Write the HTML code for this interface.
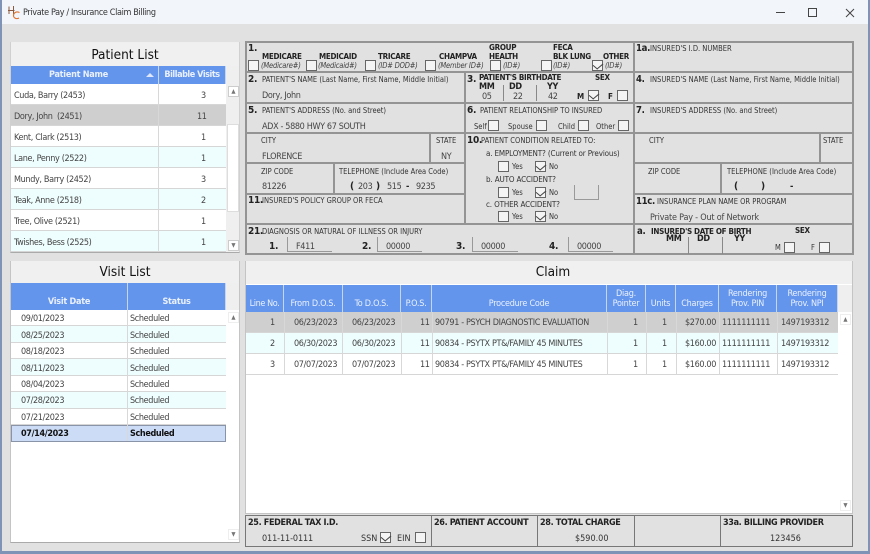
<!DOCTYPE html>
<html><head><meta charset="utf-8">
<style>
html,body{margin:0;padding:0}
#w{position:relative;width:870px;height:554px;overflow:hidden;background:#e1e1e1;font-family:"DejaVu Sans Condensed","Liberation Sans",sans-serif;font-size:9px;color:#333}
#w div{position:absolute;box-sizing:border-box}
.t{white-space:nowrap;line-height:12px;height:12px;margin-top:1px}
.b{font-weight:bold;letter-spacing:-.3px;color:#222}
.s{font-size:7.5px;color:#333}
.m{font-size:8px;font-weight:bold;color:#222;letter-spacing:-.3px}
.ft{font-size:9px;letter-spacing:-.35px}
.i{font-size:7.5px;font-style:italic;color:#444;letter-spacing:-.2px}
.v{font-size:9px;color:#444;letter-spacing:-.35px}
.h{background:#949494;height:2px}
.l{background:#949494;width:2px}
.c{width:11px;height:11px;background:#f4f4f4;border:1px solid #666}
.k::after{content:"";position:absolute;left:2px;top:0;width:5px;height:7px;border:solid #444;border-width:0 1px 1px 0;transform:rotate(40deg) skewX(-10deg)}
.pt{background:#f0f0f0;text-align:center;font-size:13.5px;color:#111;line-height:24px}
.hd{background:#6495ed;color:#eaf1fd;text-align:center;font-size:9px;letter-spacing:-.25px;border-right:1px solid #c8d4e8}
.r{background:#fff;border-bottom:1px solid #d6d6d6}
.r.a{background:#eefdfd}
.r.g{background:#cfcfcf}
.r.sel{background:#ccdcf6;border:1px solid #8a94a8;font-weight:bold;color:#111}
.vl{background:#d8d8d8;width:1px}
.sb{background:#fff;border:1px solid #eee;width:11px;height:11px;text-align:center;font-size:6px;line-height:10px;color:#777}
.f{border-left:1px solid #999;border-bottom:1px solid #999;height:15px}
</style></head><body><div id="w">

<!-- window frame -->
<div style="left:0;top:0;width:870px;height:24px;background:#f2f5fa"></div>
<div style="left:0;top:0;width:2px;height:554px;background:#7f93b6"></div>
<div style="right:0;top:0;width:2px;height:554px;background:#7f93b6"></div>
<div style="left:0;top:551px;width:870px;height:3px;background:#7f93b6"></div>
<svg style="position:absolute;left:7px;top:5px" width="14" height="15" viewBox="0 0 14 15"><path d="M2 1.5V9M6.5 1V9M1 5.5H7.5" stroke="#8a5a40" stroke-width="1" fill="none"/><path d="M12.5 7.5C9 6 6.5 8 6.5 10.5 6.5 13 9.5 14.5 12 13" stroke="#e0702a" stroke-width="1.1" fill="none"/></svg>
<div class="t v" style="left:23px;top:6px;color:#333">Private Pay / Insurance Claim Billing</div>
<div style="left:776px;top:12px;width:9px;height:1px;background:#444"></div>
<div style="left:808px;top:8px;width:9px;height:9px;border:1px solid #444"></div>
<svg style="position:absolute;left:845px;top:8px" width="10" height="10"><path d="M1 1L9 9M9 1L1 9" stroke="#444" stroke-width="1" fill="none"/></svg>

<!-- Patient list -->
<div style="left:10px;top:42px;width:230px;height:211px;background:#efefef;border-bottom:1px solid #aaa;border-left:1px solid #d0d0d0;border-right:1px solid #d0d0d0"></div>
<div class="pt" style="left:11px;top:43px;width:228px;height:23px">Patient List</div>
<div class="hd" style="left:11px;top:66px;width:148px;height:18px;line-height:18px;font-weight:bold;padding-right:12px">Patient Name</div>
<div style="left:146px;top:73px;width:0;height:0;border:4px solid transparent;border-bottom-color:#dfe8fa;border-top:0"></div>
<div class="hd" style="left:159px;top:66px;width:67px;height:18px;line-height:18px;font-weight:bold;letter-spacing:-.45px">Billable Visits</div>

<div class="r" style="left:11px;top:84px;width:215px;height:21px"></div>
<div class="r g" style="left:11px;top:105px;width:215px;height:21px"></div>
<div class="r" style="left:11px;top:126px;width:215px;height:21px"></div>
<div class="r a" style="left:11px;top:147px;width:215px;height:21px"></div>
<div class="r" style="left:11px;top:168px;width:215px;height:21px"></div>
<div class="r a" style="left:11px;top:189px;width:215px;height:21px"></div>
<div class="r" style="left:11px;top:210px;width:215px;height:21px"></div>
<div class="r a" style="left:11px;top:231px;width:215px;height:21px"></div>
<div class="vl" style="left:158px;top:84px;height:168px"></div>

<div class="t v" style="left:14px;top:89px">Cuda, Barry (2453)</div><div class="t v" style="left:201px;top:89px">3</div>
<div class="t v" style="left:14px;top:110px">Dory, John &nbsp;(2451)</div><div class="t v" style="left:197px;top:110px">11</div>
<div class="t v" style="left:14px;top:131px">Kent, Clark (2513)</div><div class="t v" style="left:201px;top:131px">1</div>
<div class="t v" style="left:14px;top:152px">Lane, Penny (2522)</div><div class="t v" style="left:201px;top:152px">1</div>
<div class="t v" style="left:14px;top:173px">Mundy, Barry (2452)</div><div class="t v" style="left:201px;top:173px">3</div>
<div class="t v" style="left:14px;top:194px">Teak, Anne (2518)</div><div class="t v" style="left:201px;top:194px">2</div>
<div class="t v" style="left:14px;top:215px">Tree, Olive (2521)</div><div class="t v" style="left:201px;top:215px">1</div>
<div class="t v" style="left:14px;top:236px">Twishes, Bess (2525)</div><div class="t v" style="left:201px;top:236px">1</div>

<div style="left:227px;top:84px;width:12px;height:168px;background:#efefef"></div>
<div style="left:227px;top:124px;width:12px;height:88px;background:#fff;border:1px solid #ddd"></div>
<div class="sb" style="left:228px;top:86px;border-color:#ccc">&#9650;</div>
<div class="sb" style="left:228px;top:240px;border-color:#ccc">&#9660;</div>

<!-- Visit list -->
<div style="left:10px;top:261px;width:230px;height:282px;background:#fff;border:1px solid #c4c4c4;border-bottom:1px solid #aaa"></div>
<div class="pt" style="left:11px;top:261px;width:228px;height:22px;line-height:22px">Visit List</div>
<div style="left:226px;top:283px;width:13px;height:27px;background:#efefef"></div>
<div class="hd" style="left:11px;top:283px;width:117px;height:27px;line-height:39px;font-weight:bold">Visit Date</div>
<div class="hd" style="left:128px;top:283px;width:98px;height:27px;line-height:39px;font-weight:bold">Status</div>

<div class="r" style="left:11px;top:310px;width:215px;height:16px"></div>
<div class="r a" style="left:11px;top:326px;width:215px;height:17px"></div>
<div class="r" style="left:11px;top:343px;width:215px;height:16px"></div>
<div class="r a" style="left:11px;top:359px;width:215px;height:17px"></div>
<div class="r" style="left:11px;top:376px;width:215px;height:16px"></div>
<div class="r a" style="left:11px;top:392px;width:215px;height:17px"></div>
<div class="r" style="left:11px;top:409px;width:215px;height:16px"></div>
<div class="r sel" style="left:11px;top:425px;width:215px;height:17px"></div>
<div class="vl" style="left:127px;top:310px;height:131px"></div>

<div class="t v" style="left:21px;top:312px">09/01/2023</div><div class="t v" style="left:130px;top:312px">Scheduled</div>
<div class="t v" style="left:21px;top:329px">08/25/2023</div><div class="t v" style="left:130px;top:329px">Scheduled</div>
<div class="t v" style="left:21px;top:345px">08/18/2023</div><div class="t v" style="left:130px;top:345px">Scheduled</div>
<div class="t v" style="left:21px;top:362px">08/11/2023</div><div class="t v" style="left:130px;top:362px">Scheduled</div>
<div class="t v" style="left:21px;top:378px">08/04/2023</div><div class="t v" style="left:130px;top:378px">Scheduled</div>
<div class="t v" style="left:21px;top:394px">07/28/2023</div><div class="t v" style="left:130px;top:394px">Scheduled</div>
<div class="t v" style="left:21px;top:411px">07/21/2023</div><div class="t v" style="left:130px;top:411px">Scheduled</div>
<div class="t v" style="left:21px;top:427px;font-weight:bold;color:#111">07/14/2023</div><div class="t v" style="left:130px;top:427px;font-weight:bold;color:#111">Scheduled</div>
<div class="sb" style="left:228px;top:312px">&#9650;</div>
<div class="sb" style="left:228px;top:529px">&#9660;</div>

<!-- Form background lines -->
<div style="left:245px;top:41px;width:609px;height:214px;border:2px solid #949494"></div>
<div class="h" style="left:246px;top:71px;width:607px"></div>
<div class="h" style="left:246px;top:102px;width:607px"></div>
<div class="h" style="left:246px;top:132px;width:607px"></div>
<div class="h" style="left:246px;top:162px;width:219px"></div>
<div class="h" style="left:633px;top:162px;width:220px"></div>
<div class="h" style="left:246px;top:193px;width:219px"></div>
<div class="h" style="left:633px;top:193px;width:220px"></div>
<div class="h" style="left:246px;top:223px;width:607px"></div>
<div class="l" style="left:464px;top:72px;height:152px"></div>
<div class="l" style="left:633px;top:42px;height:212px"></div>
<div class="l" style="left:429px;top:133px;height:30px"></div>
<div class="l" style="left:333px;top:163px;height:30px"></div>
<div class="l" style="left:819px;top:133px;height:30px"></div>
<div class="l" style="left:720px;top:163px;height:30px"></div>
<div class="vl" style="left:503px;top:85px;height:16px;background:#888"></div>
<div class="vl" style="left:536px;top:85px;height:16px;background:#888"></div>
<div class="vl" style="left:688px;top:237px;height:17px;background:#888"></div>
<div class="vl" style="left:722px;top:237px;height:17px;background:#888"></div>

<!-- Box 1 -->
<div class="t b" style="left:248px;top:42px;font-size:10px">1.</div>
<div class="t m" style="left:262px;top:50px">MEDICARE</div>
<div class="t m" style="left:319px;top:50px">MEDICAID</div>
<div class="t m" style="left:378px;top:50px">TRICARE</div>
<div class="t m" style="left:439px;top:50px">CHAMPVA</div>
<div class="t m" style="left:489px;top:41px">GROUP</div>
<div class="t m" style="left:489px;top:50px">HEALTH</div>
<div class="t m" style="left:553px;top:41px">FECA</div>
<div class="t m" style="left:553px;top:50px">BLK LUNG</div>
<div class="t m" style="left:603px;top:50px">OTHER</div>
<div class="c" style="left:248px;top:60px"></div><div class="t i" style="left:261px;top:59px">(Medicare#)</div>
<div class="c" style="left:306px;top:60px"></div><div class="t i" style="left:318px;top:59px">(Medicaid#)</div>
<div class="c" style="left:365px;top:60px"></div><div class="t i" style="left:378px;top:59px">(ID# DOD#)</div>
<div class="c" style="left:425px;top:60px"></div><div class="t i" style="left:438px;top:59px">(Member ID#)</div>
<div class="c" style="left:490px;top:60px"></div><div class="t i" style="left:503px;top:59px">(ID#)</div>
<div class="c" style="left:541px;top:60px"></div><div class="t i" style="left:553px;top:59px">(ID#)</div>
<div class="c k" style="left:592px;top:60px"></div><div class="t i" style="left:605px;top:59px">(ID#)</div>
<div class="t b" style="left:636px;top:42px;font-size:9.5px">1a.</div>
<div class="t s" style="left:650px;top:42px">INSURED'S I.D. NUMBER</div>

<!-- Box 2 / 3 / 4 -->
<div class="t b" style="left:248px;top:73px;font-size:10px">2.</div>
<div class="t s" style="left:262px;top:73px">PATIENT'S NAME (Last Name, First Name, Middle Initial)</div>
<div class="t v" style="left:262px;top:89px">Dory, John</div>
<div class="t b" style="left:467px;top:73px;font-size:10px">3.</div>
<div class="t m" style="left:479px;top:71px">PATIENT'S BIRTHDATE</div>
<div class="t m" style="left:595px;top:71px">SEX</div>
<div class="t b" style="left:479px;top:80px;font-size:9px">MM</div>
<div class="t b" style="left:509px;top:80px;font-size:9px">DD</div>
<div class="t b" style="left:547px;top:80px;font-size:9px">YY</div>
<div class="t v" style="left:482px;top:90px">05</div>
<div class="t v" style="left:513px;top:90px">22</div>
<div class="t v" style="left:548px;top:90px">42</div>
<div class="t m" style="left:577px;top:90px">M</div><div class="c k" style="left:588px;top:90px"></div>
<div class="t m" style="left:608px;top:90px">F</div><div class="c" style="left:617px;top:90px"></div>
<div class="t b" style="left:636px;top:73px;font-size:9.5px">4.</div>
<div class="t s" style="left:650px;top:73px">INSURED'S NAME (Last Name, First Name, Middle Initial)</div>

<!-- Box 5 / 6 / 7 -->
<div class="t b" style="left:248px;top:104px;font-size:10px">5.</div>
<div class="t s" style="left:262px;top:104px">PATIENT'S ADDRESS (No. and Street)</div>
<div class="t v" style="left:262px;top:120px">ADX - 5880 HWY 67 SOUTH</div>
<div class="t b" style="left:467px;top:104px;font-size:10px">6.</div>
<div class="t s" style="left:480px;top:104px">PATIENT RELATIONSHIP TO INSURED</div>
<div class="t s" style="left:474px;top:120px">Self</div><div class="c" style="left:488px;top:120px"></div>
<div class="t s" style="left:508px;top:120px">Spouse</div><div class="c" style="left:536px;top:120px"></div>
<div class="t s" style="left:558px;top:120px">Child</div><div class="c" style="left:578px;top:120px"></div>
<div class="t s" style="left:596px;top:120px">Other</div><div class="c" style="left:618px;top:120px"></div>
<div class="t b" style="left:636px;top:104px;font-size:9.5px">7.</div>
<div class="t s" style="left:650px;top:104px">INSURED'S ADDRESS (No. and Street)</div>

<!-- City -->
<div class="t s" style="left:261px;top:134px">CITY</div>
<div class="t v" style="left:262px;top:150px">FLORENCE</div>
<div class="t s" style="left:436px;top:134px">STATE</div>
<div class="t v" style="left:441px;top:150px">NY</div>
<div class="t b" style="left:467px;top:134px;font-size:10px">10.</div>
<div class="t s" style="left:481px;top:134px">PATIENT CONDITION RELATED TO:</div>
<div class="t s" style="left:486px;top:147px;font-size:8px;letter-spacing:-.15px">a. EMPLOYMENT? (Current or Previous)</div>
<div class="c" style="left:498px;top:161px"></div><div class="t s" style="left:512px;top:160px">Yes</div>
<div class="c k" style="left:535px;top:161px"></div><div class="t s" style="left:549px;top:160px">No</div>
<div class="t s" style="left:486px;top:173px;font-size:8px;letter-spacing:-.15px">b. AUTO ACCIDENT?</div>
<div class="c" style="left:498px;top:187px"></div><div class="t s" style="left:512px;top:186px">Yes</div>
<div class="c k" style="left:535px;top:187px"></div><div class="t s" style="left:549px;top:186px">No</div>
<div style="left:574px;top:185px;width:25px;height:15px;border:1px solid #999;border-top:0"></div>
<div class="t s" style="left:486px;top:198px;font-size:8px;letter-spacing:-.15px">c. OTHER ACCIDENT?</div>
<div class="c" style="left:498px;top:211px"></div><div class="t s" style="left:512px;top:210px">Yes</div>
<div class="c k" style="left:535px;top:211px"></div><div class="t s" style="left:549px;top:210px">No</div>
<div class="t s" style="left:649px;top:134px">CITY</div>
<div class="t s" style="left:823px;top:134px">STATE</div>

<!-- Zip -->
<div class="t s" style="left:261px;top:165px">ZIP CODE</div>
<div class="t s" style="left:339px;top:165px">TELEPHONE (Include Area Code)</div>
<div class="t v" style="left:262px;top:180px">81226</div>
<div class="t b" style="left:350px;top:180px;font-size:10px">(</div>
<div class="t v" style="left:358px;top:180px">203</div>
<div class="t b" style="left:376px;top:180px;font-size:10px">)</div>
<div class="t v" style="left:387px;top:180px">515</div>
<div class="t b" style="left:406px;top:180px">-</div>
<div class="t v" style="left:416px;top:180px">9235</div>
<div class="t s" style="left:648px;top:165px">ZIP CODE</div>
<div class="t s" style="left:727px;top:165px">TELEPHONE (Include Area Code)</div>
<div class="t b" style="left:734px;top:180px;font-size:10px">(</div>
<div class="t b" style="left:761px;top:180px;font-size:10px">)</div>
<div class="t b" style="left:790px;top:180px">-</div>

<!-- 11 -->
<div class="t b" style="left:248px;top:194px;font-size:10px">11.</div>
<div class="t s" style="left:262px;top:194px">INSURED'S POLICY GROUP OR FECA</div>
<div class="t b" style="left:636px;top:195px;font-size:9.5px">11c.</div>
<div class="t s" style="left:657px;top:195px">INSURANCE PLAN NAME OR PROGRAM</div>
<div class="t v" style="left:650px;top:211px;letter-spacing:-.2px">Private Pay - Out of Network</div>

<!-- 21 -->
<div class="t b" style="left:248px;top:225px;font-size:10px">21.</div>
<div class="t s" style="left:262px;top:225px">DIAGNOSIS OR NATURAL OF ILLNESS OR INJURY</div>
<div class="t b" style="left:269px;top:240px;font-size:10px">1.</div>
<div class="f" style="left:287px;top:237px;width:45px"></div><div class="t v" style="left:296px;top:240px">F411</div>
<div class="t b" style="left:362px;top:240px;font-size:10px">2.</div>
<div class="f" style="left:377px;top:237px;width:45px"></div><div class="t v" style="left:386px;top:240px">00000</div>
<div class="t b" style="left:456px;top:240px;font-size:10px">3.</div>
<div class="f" style="left:472px;top:237px;width:46px"></div><div class="t v" style="left:481px;top:240px">00000</div>
<div class="t b" style="left:549px;top:240px;font-size:10px">4.</div>
<div class="f" style="left:568px;top:237px;width:45px"></div><div class="t v" style="left:577px;top:240px">00000</div>
<div class="t b" style="left:637px;top:225px;font-size:9.5px">a.</div>
<div class="t m" style="left:651px;top:225px">INSURED'S DATE OF BIRTH</div>
<div class="t m" style="left:795px;top:224px">SEX</div>
<div class="t b" style="left:666px;top:232px;font-size:9px">MM</div>
<div class="t b" style="left:697px;top:232px;font-size:9px">DD</div>
<div class="t b" style="left:734px;top:232px;font-size:9px">YY</div>
<div class="t s" style="left:775px;top:241px">M</div><div class="c" style="left:784px;top:242px"></div>
<div class="t s" style="left:811px;top:241px">F</div><div class="c" style="left:819px;top:242px"></div>

<!-- Claim -->
<div style="left:245px;top:261px;width:608px;height:253px;background:#fff;border:1px solid #c4c4c4"></div>
<div class="pt" style="left:246px;top:261px;width:606px;height:23px;line-height:22px;text-indent:8px">Claim</div>
<div style="left:838px;top:285px;width:14px;height:27px;background:#efefef"></div>
<div class="hd" style="left:246px;top:285px;width:38px;height:27px;line-height:38px;letter-spacing:-.4px">Line No.</div>
<div class="hd" style="left:284px;top:285px;width:59px;height:27px;line-height:38px">From D.O.S.</div>
<div class="hd" style="left:343px;top:285px;width:58px;height:27px;line-height:38px">To D.O.S.</div>
<div class="hd" style="left:401px;top:285px;width:31px;height:27px;line-height:38px">P.O.S.</div>
<div class="hd" style="left:432px;top:285px;width:175px;height:27px;line-height:38px">Procedure Code</div>
<div class="hd" style="left:607px;top:285px;width:39px;height:27px;line-height:10px;padding-top:4px">Diag.<br>Pointer</div>
<div class="hd" style="left:646px;top:285px;width:30px;height:27px;line-height:38px">Units</div>
<div class="hd" style="left:676px;top:285px;width:43px;height:27px;line-height:38px">Charges</div>
<div class="hd" style="left:719px;top:285px;width:58px;height:27px;line-height:10px;padding-top:4px">Rendering<br>Prov. PIN</div>
<div class="hd" style="left:777px;top:285px;width:61px;height:27px;line-height:10px;padding-top:4px">Rendering<br>Prov. NPI</div>

<div class="r g" style="left:246px;top:312px;width:592px;height:21px"></div>
<div class="r a" style="left:246px;top:333px;width:592px;height:21px"></div>
<div class="r" style="left:246px;top:354px;width:592px;height:21px"></div>
<div class="vl" style="left:284px;top:312px;height:63px"></div>
<div class="vl" style="left:342px;top:312px;height:63px"></div>
<div class="vl" style="left:401px;top:312px;height:63px"></div>
<div class="vl" style="left:432px;top:312px;height:63px"></div>
<div class="vl" style="left:607px;top:312px;height:63px"></div>
<div class="vl" style="left:646px;top:312px;height:63px"></div>
<div class="vl" style="left:676px;top:312px;height:63px"></div>
<div class="vl" style="left:719px;top:312px;height:63px"></div>
<div class="vl" style="left:777px;top:312px;height:63px"></div>

<div class="t v" style="left:270px;top:316px">1</div><div class="t v" style="left:294px;top:316px">06/23/2023</div><div class="t v" style="left:352px;top:316px">06/23/2023</div><div class="t v" style="left:420px;top:316px">11</div><div class="t v" style="left:435px;top:316px">90791 - PSYCH DIAGNOSTIC EVALUATION</div><div class="t v" style="left:633px;top:316px">1</div><div class="t v" style="left:662px;top:316px">1</div><div class="t v" style="left:685px;top:316px">$270.00</div><div class="t v" style="left:722px;top:316px">1111111111</div><div class="t v" style="left:781px;top:316px">1497193312</div>
<div class="t v" style="left:270px;top:337px">2</div><div class="t v" style="left:294px;top:337px">06/30/2023</div><div class="t v" style="left:352px;top:337px">06/30/2023</div><div class="t v" style="left:420px;top:337px">11</div><div class="t v" style="left:435px;top:337px">90834 - PSYTX PT&amp;/FAMILY 45 MINUTES</div><div class="t v" style="left:633px;top:337px">1</div><div class="t v" style="left:662px;top:337px">1</div><div class="t v" style="left:685px;top:337px">$160.00</div><div class="t v" style="left:722px;top:337px">1111111111</div><div class="t v" style="left:781px;top:337px">1497193312</div>
<div class="t v" style="left:270px;top:358px">3</div><div class="t v" style="left:294px;top:358px">07/07/2023</div><div class="t v" style="left:352px;top:358px">07/07/2023</div><div class="t v" style="left:420px;top:358px">11</div><div class="t v" style="left:435px;top:358px">90834 - PSYTX PT&amp;/FAMILY 45 MINUTES</div><div class="t v" style="left:633px;top:358px">1</div><div class="t v" style="left:662px;top:358px">1</div><div class="t v" style="left:685px;top:358px">$160.00</div><div class="t v" style="left:722px;top:358px">1111111111</div><div class="t v" style="left:781px;top:358px">1497193312</div>
<div class="sb" style="left:840px;top:314px">&#9650;</div>
<div class="sb" style="left:840px;top:500px">&#9660;</div>

<!-- Footer -->
<div style="left:245px;top:515px;width:608px;height:32px;border:1px solid #777"></div>
<div class="vl" style="left:431px;top:515px;height:32px;background:#777"></div>
<div class="vl" style="left:537px;top:515px;height:32px;background:#777"></div>
<div class="vl" style="left:634px;top:515px;height:32px;background:#777"></div>
<div class="vl" style="left:720px;top:515px;height:32px;background:#777"></div>
<div class="t m ft" style="left:248px;top:516px">25. FEDERAL TAX I.D.</div>
<div class="t m ft" style="left:434px;top:516px">26. PATIENT ACCOUNT</div>
<div class="t m ft" style="left:540px;top:516px">28. TOTAL CHARGE</div>
<div class="t m ft" style="left:723px;top:516px">33a. BILLING PROVIDER</div>
<div class="t" style="left:262px;top:532px;letter-spacing:-.1px">011-11-0111</div>
<div class="t" style="left:361px;top:532px">SSN</div><div class="c k" style="left:380px;top:532px"></div>
<div class="t" style="left:397px;top:532px">EIN</div><div class="c" style="left:415px;top:532px"></div>
<div class="t" style="left:575px;top:532px">$590.00</div>
<div class="t" style="left:770px;top:532px">123456</div>
</div></body></html>
